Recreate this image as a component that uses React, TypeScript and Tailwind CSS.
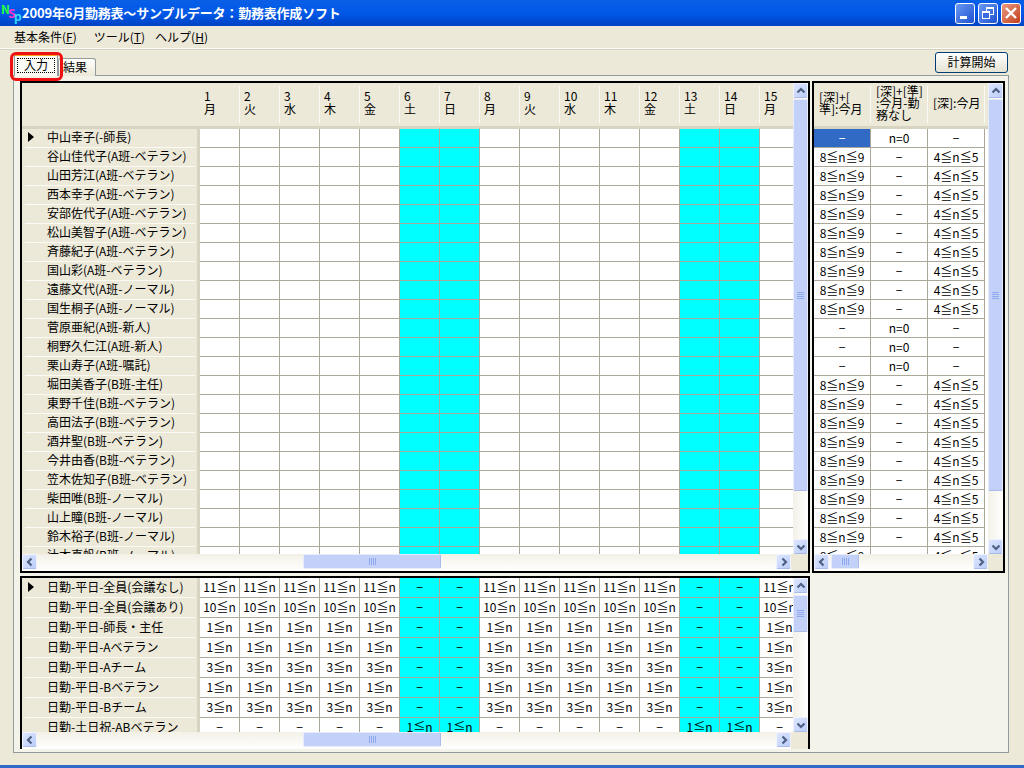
const DAYS = ["月", "火", "水", "木", "金", "土", "日", "月", "火", "水", "木", "金", "土", "日", "月"]
const isWeekend = (i: number) => i === 5 || i === 6 || i === 12 || i === 13

const NAMES = [
  "中山幸子(-師長)",
  "谷山佳代子(A班-ベテラン)",
  "山田芳江(A班-ベテラン)",
  "西本幸子(A班-ベテラン)",
  "安部佐代子(A班-ベテラン)",
  "松山美智子(A班-ベテラン)",
  "斉藤紀子(A班-ベテラン)",
  "国山彩(A班-ベテラン)",
  "遠藤文代(A班-ノーマル)",
  "国生桐子(A班-ノーマル)",
  "菅原亜紀(A班-新人)",
  "桐野久仁江(A班-新人)",
  "栗山寿子(A班-嘱託)",
  "堀田美香子(B班-主任)",
  "東野千佳(B班-ベテラン)",
  "高田法子(B班-ベテラン)",
  "酒井聖(B班-ベテラン)",
  "今井由香(B班-ベテラン)",
  "笠木佐知子(B班-ベテラン)",
  "柴田唯(B班-ノーマル)",
  "山上瞳(B班-ノーマル)",
  "鈴木裕子(B班-ノーマル)",
  "辻本真帆(B班-ノーマル)",
]

const DASH = "−"

const DEMANDS: { label: string; weekday: string; weekend: string }[] = [
  { label: "日勤-平日-全員(会議なし)", weekday: "11≦n", weekend: DASH },
  { label: "日勤-平日-全員(会議あり)", weekday: "10≦n", weekend: DASH },
  { label: "日勤-平日-師長・主任", weekday: "1≦n", weekend: DASH },
  { label: "日勤-平日-Aベテラン", weekday: "1≦n", weekend: DASH },
  { label: "日勤-平日-Aチーム", weekday: "3≦n", weekend: DASH },
  { label: "日勤-平日-Bベテラン", weekday: "1≦n", weekend: DASH },
  { label: "日勤-平日-Bチーム", weekday: "3≦n", weekend: DASH },
  { label: "日勤-土日祝-ABベテラン", weekday: DASH, weekend: "1≦n" },
]

const LIMIT_ROWS = NAMES.map((_, i) => {
  const off = i === 0 || (i >= 10 && i <= 12)
  return off ? [DASH, "n=0", DASH] : ["8≦n≦9", DASH, "4≦n≦5"]
})

function ArrowButton({ dir }: { dir: "up" | "down" | "left" | "right" }) {
  const points = {
    up: "1.5,6.5 5,3 8.5,6.5",
    down: "1.5,3.5 5,7 8.5,3.5",
    left: "6.5,1.5 3,5 6.5,8.5",
    right: "3.5,1.5 7,5 3.5,8.5",
  }[dir]
  return (
    <div className="w-[15px] h-[15px] shrink-0 flex items-center justify-center rounded-[2px] border border-[#f0f3fd] border-b-[#a9bbe9] bg-gradient-to-br from-[#dde6fe] to-[#bccdf9]">
      <svg width="10" height="10" viewBox="0 0 10 10" className="shrink-0">
        <polyline points={points} fill="none" stroke="#4d6185" strokeWidth="2.2" />
      </svg>
    </div>
  )
}

function VGrip() {
  return (
    <div className="flex flex-col gap-px w-[7px]">
      <div className="h-px bg-[#8fa9ef]" />
      <div className="h-px bg-[#8fa9ef]" />
      <div className="h-px bg-[#8fa9ef]" />
      <div className="h-px bg-[#8fa9ef]" />
    </div>
  )
}

function HGrip() {
  return (
    <div className="flex gap-px h-[7px]">
      <div className="w-px bg-[#8fa9ef]" />
      <div className="w-px bg-[#8fa9ef]" />
      <div className="w-px bg-[#8fa9ef]" />
      <div className="w-px bg-[#8fa9ef]" />
    </div>
  )
}

function VScroll({ thumb }: { thumb: string }) {
  return (
    <div className="w-[15px] shrink-0 flex flex-col justify-between bg-gradient-to-r from-[#f3f1e7] to-white">
      <ArrowButton dir="up" />
      <div className="flex-1 min-h-0">
        <div className={`w-[15px] flex items-center justify-center rounded-[2px] border border-[#e6ecfc] border-b-[#a9bbe9] bg-[#c3d1f8] ${thumb}`}>
          <VGrip />
        </div>
      </div>
      <ArrowButton dir="down" />
    </div>
  )
}

function HScroll({ lead, thumb, width }: { lead: string; thumb: string; width: string }) {
  return (
    <div className="h-[17px] shrink-0 flex bg-[#ece9d8]">
      <div className={`flex items-start justify-between bg-gradient-to-b from-[#f3f1e7] to-white ${width}`}>
        <ArrowButton dir="left" />
        <div className="flex-1">
          <div className={`h-[15px] flex items-center justify-center rounded-[2px] border border-[#e6ecfc] border-r-[#a9bbe9] bg-[#c3d1f8] ${lead} ${thumb}`}>
            <HGrip />
          </div>
        </div>
        <ArrowButton dir="right" />
      </div>
    </div>
  )
}

function RowHeader({ label, current, height }: { label: string; current?: boolean; height: string }) {
  return (
    <div className={`w-[178px] shrink-0 flex bg-[#ece9d8] ${height}`}>
      <div className="flex-1 flex items-center pb-[2px] border-b border-[#fbfaf5] ml-[3px] mr-[2px]">
        <div className="w-[22px] shrink-0 flex justify-start pl-[3px]">
          {current && <div className="w-0 h-0 border-y-[5px] border-y-transparent border-l-[6px] border-l-black" />}
        </div>
        <span className="whitespace-nowrap">{label}</span>
      </div>
      <div className="w-[3px] bg-[#d8d4c2]" />
    </div>
  )
}

function DayHeader() {
  return (
    <div className="h-[46px] flex shrink-0 bg-[#ece9d8]">
      <div className="w-[178px] shrink-0 border-b-[3px] border-[#d8d4c2]" />
      {DAYS.map((d, i) => (
        <div key={i} className="w-[40px] shrink-0 flex border-b-[3px] border-[#d8d4c2]">
          <div className="flex-1 flex flex-col justify-center pl-[4px] pb-[5px] leading-[13px]">
            <span>{i + 1}</span>
            <span>{d}</span>
          </div>
          <div className="w-px my-[3px] bg-[#fbfaf5]" />
        </div>
      ))}
    </div>
  )
}

function ShiftGrid() {
  return (
    <div className="w-[790px] h-[492px] flex flex-col border-2 border-black">
      <div className="flex flex-1 min-h-0">
        <div className="w-[771px] flex flex-col overflow-hidden bg-white">
          <DayHeader />
          {NAMES.map((name, r) => (
            <div key={name} className="flex shrink-0 h-[19px]">
              <RowHeader label={name} current={r === 0} height="h-[19px]" />
              {DAYS.map((_, i) => (
                <div
                  key={i}
                  className={`w-[40px] shrink-0 border-r border-b border-[#aca899] ${isWeekend(i) ? "bg-[#00ffff]" : "bg-white"}`}
                />
              ))}
            </div>
          ))}
        </div>
        <VScroll thumb="mt-[1px] h-[392px]" />
      </div>
      <HScroll width="w-[769px] mr-[17px]" lead="ml-[266px]" thumb="w-[138px]" />
    </div>
  )
}

function DemandGrid() {
  return (
    <div className="w-[790px] h-[173px] flex flex-col border-2 border-b-0 border-black">
      <div className="flex flex-1 min-h-0">
        <div className="w-[771px] flex flex-col overflow-hidden bg-white">
          {DEMANDS.map((row, r) => (
            <div key={row.label} className="flex shrink-0 h-[20px]">
              <RowHeader label={row.label} current={r === 0} height="h-[20px]" />
              {DAYS.map((_, i) => (
                <div
                  key={i}
                  className={`w-[40px] shrink-0 flex items-center justify-center pb-[1px] border-r border-b border-[#aca899] whitespace-nowrap overflow-hidden ${isWeekend(i) ? "bg-[#00ffff]" : "bg-white"}`}
                >
                  {isWeekend(i) ? row.weekend : row.weekday}
                </div>
              ))}
            </div>
          ))}
        </div>
        <VScroll thumb="mt-[2px] h-[37px]" />
      </div>
      <HScroll width="w-[769px] mr-[17px]" lead="ml-[266px]" thumb="w-[138px]" />
    </div>
  )
}

function LimitGrid() {
  const heads = [
    ["[深]+[", "準]:今月"],
    ["[深]+[準]", ":今月-勤", "務なし"],
    ["[深]:今月"],
  ]
  return (
    <div className="w-[193px] h-[492px] flex flex-col border-2 border-black">
      <div className="flex flex-1 min-h-0">
        <div className="w-[174px] flex flex-col overflow-hidden bg-white">
          <div className="h-[46px] shrink-0 flex bg-[#ece9d8] border-b-[3px] border-[#d8d4c2]">
            {heads.map((lines, i) => (
              <div key={i} className="w-[57px] shrink-0 flex">
                <div className="flex-1 flex flex-col justify-center pl-[5px] pb-[3px] leading-[12px] whitespace-nowrap">
                  {lines.map((l) => (
                    <span key={l}>{l}</span>
                  ))}
                </div>
                <div className="w-px my-[3px] bg-[#fbfaf5]" />
              </div>
            ))}
          </div>
          {LIMIT_ROWS.map((row, r) => (
            <div key={r} className="flex shrink-0 h-[19px]">
              {row.map((v, c) => (
                <div
                  key={c}
                  className={`w-[57px] shrink-0 flex items-center justify-center pb-[1px] border-r border-b border-[#aca899] ${r === 0 && c === 0 ? "bg-[#316ac5] text-white" : "bg-white"}`}
                >
                  {v}
                </div>
              ))}
            </div>
          ))}
        </div>
        <VScroll thumb="mt-[1px] h-[392px]" />
      </div>
      <HScroll width="w-[174px]" lead="ml-[2px]" thumb="w-[28px]" />
    </div>
  )
}

function WinButton({ close, children }: { close?: boolean; children: React.ReactNode }) {
  return (
    <div
      className={`w-[20px] h-[21px] flex items-center justify-center rounded-[3px] border border-white ${
        close ? "bg-gradient-to-br from-[#e89a80] to-[#c23a14]" : "bg-gradient-to-br from-[#6a98f2] to-[#1f4fd0]"
      }`}
    >
      {children}
    </div>
  )
}

export default function App() {
  return (
    <div className="w-[1024px] h-[768px] overflow-hidden flex flex-col bg-[#ece9d8] text-black text-[12px] leading-none font-['Noto_Sans_CJK_JP','Liberation_Sans',sans-serif]">
      <div className="h-[26px] shrink-0 flex items-center justify-between bg-gradient-to-b from-[#0a5fe6] via-[#0058e8] to-[#0042c4]">
        <div className="flex items-center">
          <svg width="22" height="24" viewBox="0 0 22 24" className="shrink-0">
            <text x="1" y="13" fontSize="12" fontWeight="700" fill="#22ff44">N</text>
            <text x="8" y="17" fontSize="12" fontWeight="700" fill="#ff33cc">S</text>
            <text x="14" y="20" fontSize="12" fontWeight="700" fill="#33ddff">p</text>
          </svg>
          <span className="text-white text-[13px] font-bold tracking-[-0.2px] whitespace-nowrap pb-[1px]">2009年6月勤務表～サンプルデータ：勤務表作成ソフト</span>
        </div>
        <div className="flex gap-[3px] pr-[3px]">
          <WinButton>
            <svg width="14" height="14" viewBox="0 0 14 14">
              <rect x="2" y="10" width="7" height="3" fill="white" />
            </svg>
          </WinButton>
          <WinButton>
            <svg width="14" height="14" viewBox="0 0 14 14" fill="none" stroke="white">
              <rect x="5.5" y="1.5" width="7" height="7" strokeWidth="1" />
              <rect x="5" y="1" width="8" height="2" fill="white" stroke="none" />
              <rect x="1.5" y="5.5" width="7" height="7" fill="#3a6ae0" strokeWidth="1" />
              <rect x="1" y="5" width="8" height="2" fill="white" stroke="none" />
            </svg>
          </WinButton>
          <WinButton close>
            <svg width="14" height="14" viewBox="0 0 14 14">
              <path d="M2 2 L12 12 M12 2 L2 12" stroke="white" strokeWidth="2.4" />
            </svg>
          </WinButton>
        </div>
      </div>

      <div className="h-[23px] shrink-0 flex items-center border-b border-[#fbfaf5] shadow-[0_1px_0_#d6d2c0]">
        <span className="ml-[14px]">基本条件(<span className="underline">F</span>)</span>
        <span className="ml-[17px]">ツール(<span className="underline">T</span>)</span>
        <span className="ml-[10px]">ヘルプ(<span className="underline">H</span>)</span>
      </div>

      <div className="relative h-[26px] shrink-0 flex items-end justify-between pl-[14px] pr-[16px]">
        <div className="flex items-end relative z-10 -mb-px">
          <div className="w-[44px] h-[23px] flex flex-col bg-[#fbfbf6] rounded-t-[3px] border-x border-[#919b9c]">
            <div className="h-[3px] rounded-t-[3px] bg-[#f5a623]" />
            <div className="flex-1 m-[2px] mb-[3px] flex items-center justify-center pb-[1px] border border-dotted border-black">入力</div>
          </div>
          <div className="w-[38px] h-[18px] flex items-center pl-[4px] pb-[1px] rounded-t-[3px] border border-b-0 border-[#919b9c] bg-gradient-to-b from-white to-[#ece9d8]">
            結果
          </div>
        </div>
        <div className="w-[73px] h-[21px] self-start mt-[3px] flex items-center justify-center pb-[1px] rounded-[3px] border border-[#003c74] bg-gradient-to-b from-white to-[#e6e3d3]">
          計算開始
        </div>
        <div className="absolute left-[10px] top-[3px] z-20 w-[53px] h-[29px] rounded-[6px] border-[3px] border-[#ee1111]" />
      </div>

      <div className="ml-[13px] w-[996px] h-[678px] shrink-0 flex gap-[2px] pl-[6px] pt-[5px] bg-[#f4f3ea] border border-[#919b9c]">
        <div className="flex flex-col gap-[3px]">
          <ShiftGrid />
          <DemandGrid />
        </div>
        <LimitGrid />
      </div>

      <div className="flex-1" />
      <div className="h-[3px] shrink-0 bg-[#3169c6]" />
    </div>
  )
}
